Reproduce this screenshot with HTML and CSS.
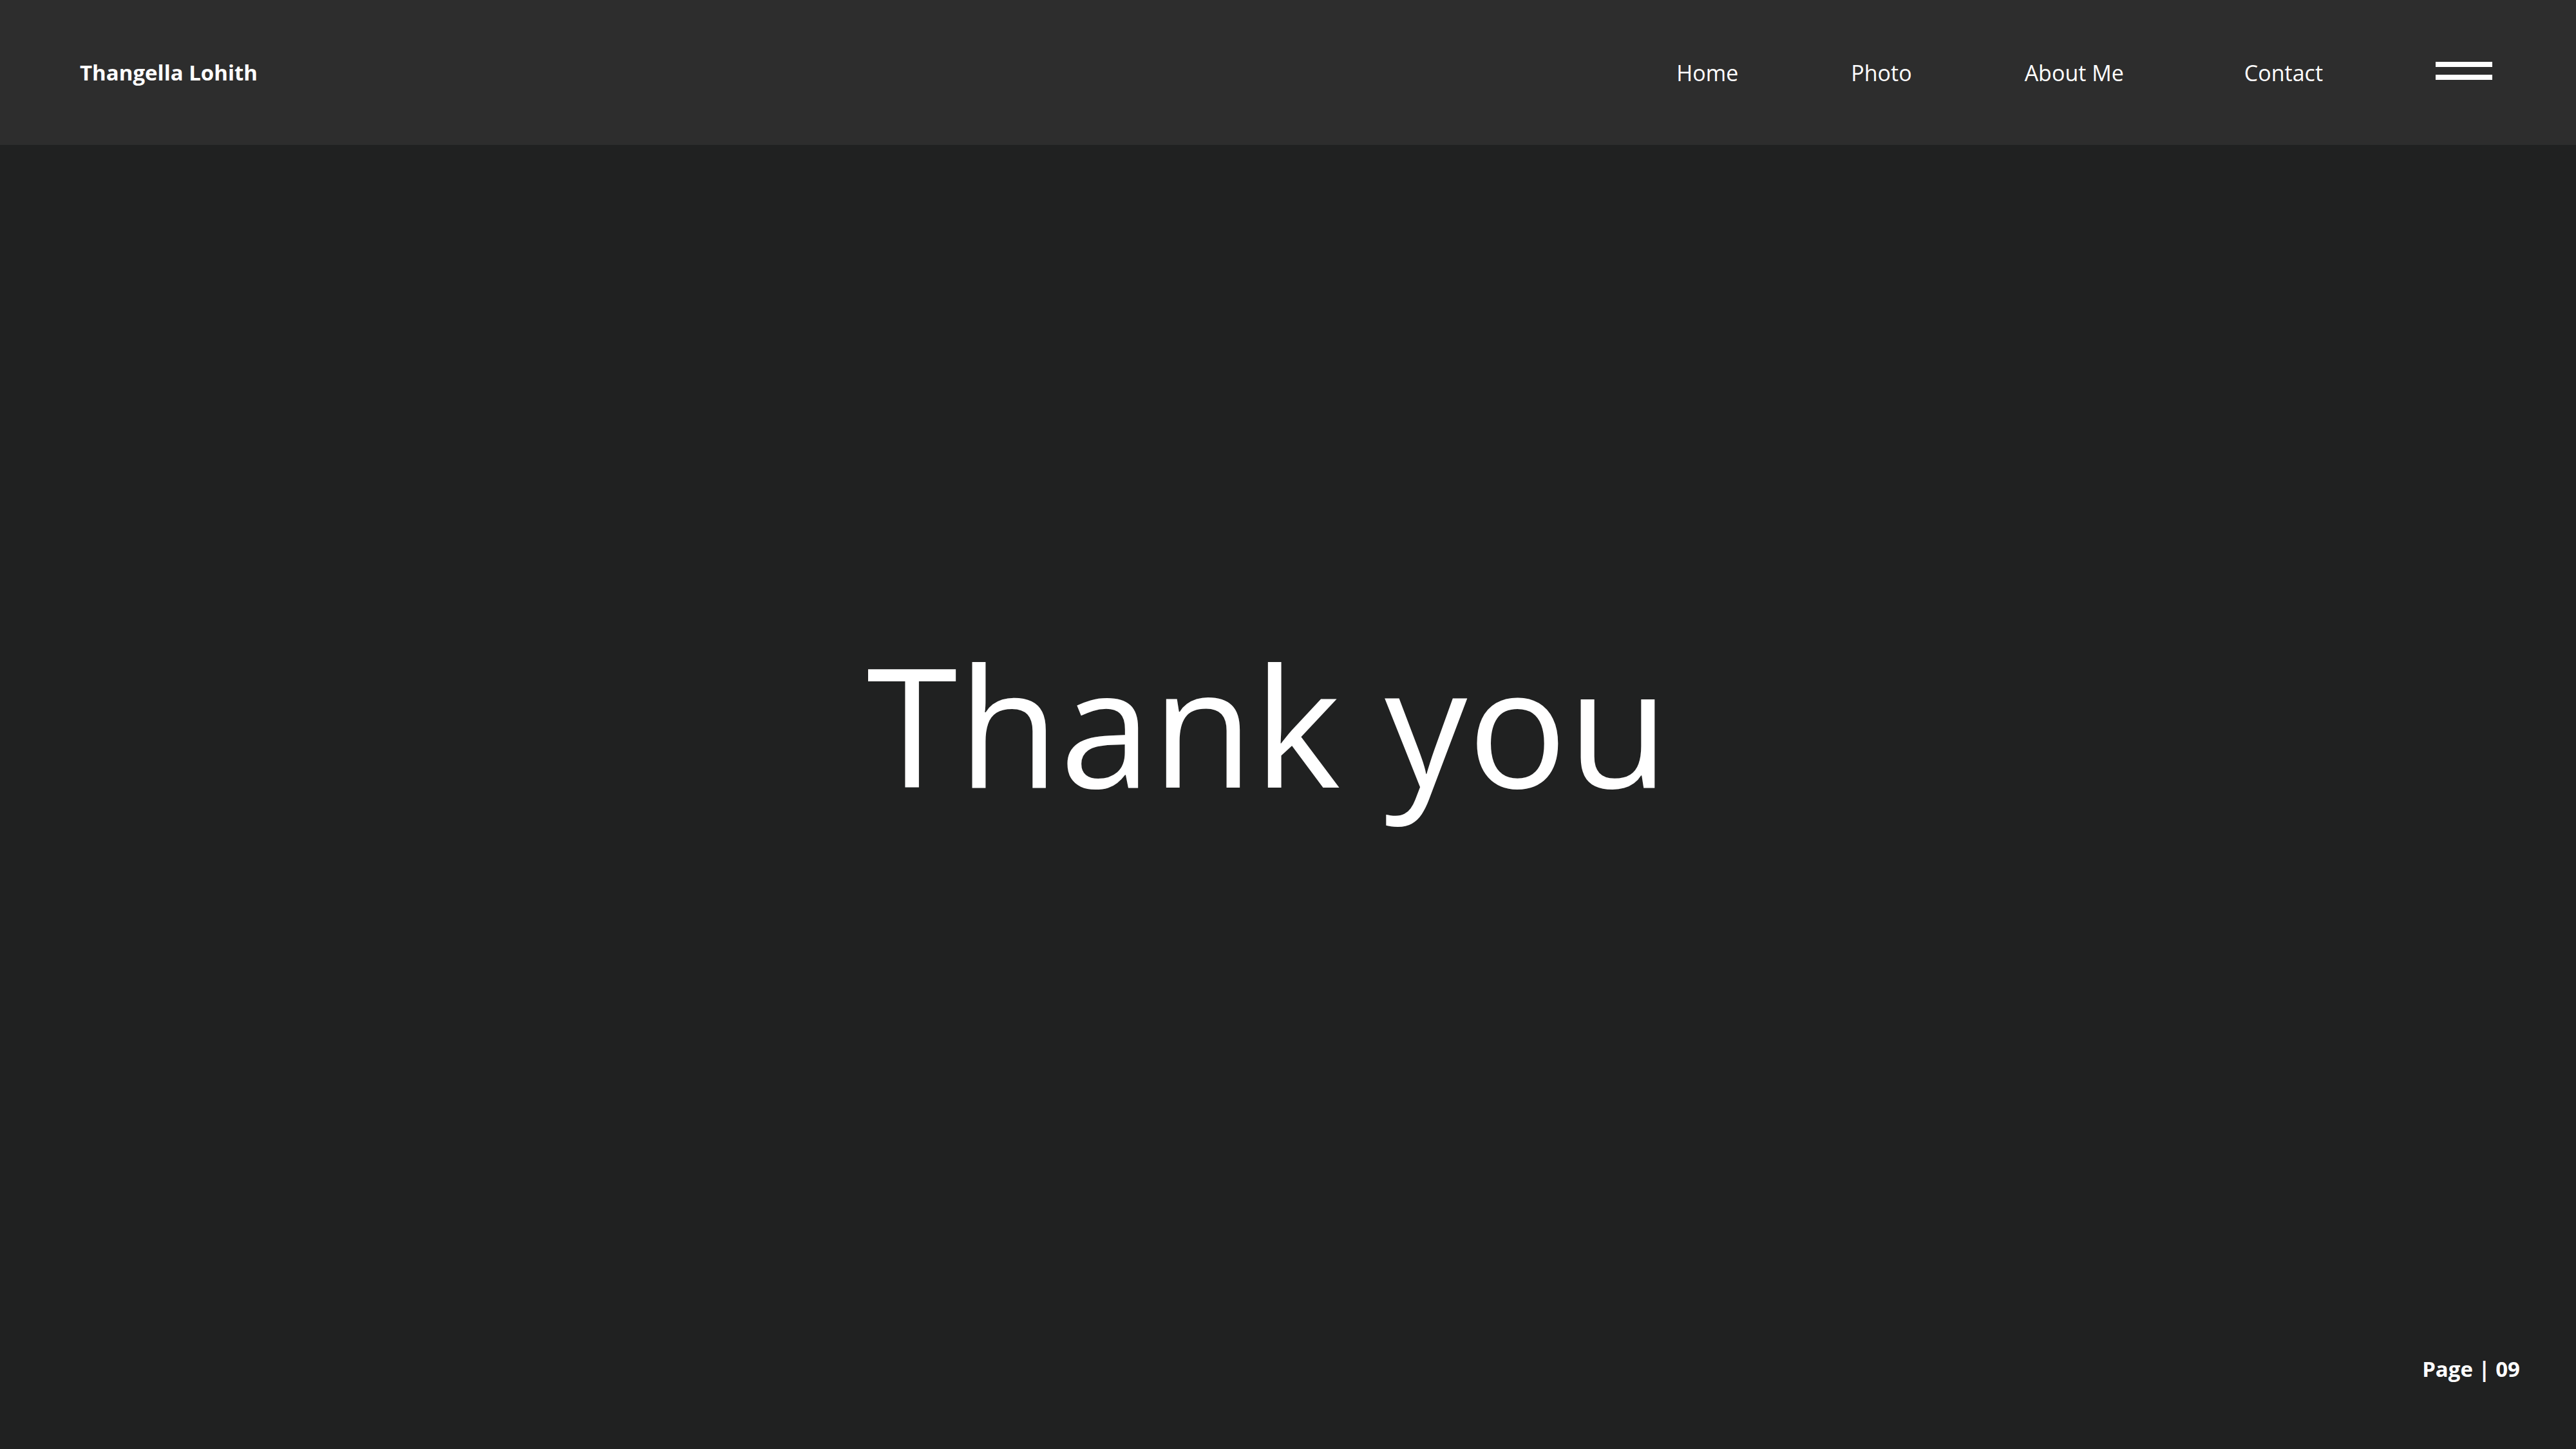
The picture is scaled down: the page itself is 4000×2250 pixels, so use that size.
FILE: index.html
```html
<!DOCTYPE html>
<html lang="en">
<head>
<meta charset="utf-8">
<title>Thangella Lohith - Thank you</title>
<link rel="stylesheet" href="styles.css">
</head>
<body>
<div class="page">
  <header class="topbar">
    <div class="brand">Thangella Lohith</div>
    <nav class="nav">
      <a class="nav-link" href="#">Home</a>
      <a class="nav-link" href="#">Photo</a>
      <a class="nav-link nav-link-wide" href="#">About Me</a>
      <a class="nav-link" href="#">Contact</a>
      <button class="menu" aria-label="Menu"><span class="bar"></span><span class="bar"></span></button>
    </nav>
  </header>
  <main class="main">
    <section class="hero">
      <h1 class="title">Thank you</h1>
    </section>
    <footer class="footer">Page | 09</footer>
  </main>
</div>
</body>
</html>
```
FILE: styles.css
```css
html, body {
  margin: 0;
  padding: 0;
}
body {
  background: #202121;
  color: #ffffff;
  font-family: "Open Sans", "Noto Sans", sans-serif;
}
.page {
  width: 4000px;
  height: 2250px;
  display: flex;
  flex-direction: column;
  overflow: hidden;
}
.topbar {
  height: 225px;
  flex: 0 0 225px;
  background: #2d2d2d;
  display: flex;
  align-items: center;
  justify-content: space-between;
  padding: 0 130px 0 124px;
  box-sizing: border-box;
}
.brand {
  font-size: 33px;
  font-weight: 700;
  line-height: 1;
}
.nav {
  display: flex;
  align-items: center;
}
.nav-link {
  color: #ffffff;
  text-decoration: none;
  font-size: 34px;
  font-weight: 400;
  line-height: 1;
  margin-right: 175px;
}
.nav-link-wide {
  margin-right: 187px;
}
.menu {
  width: 88px;
  height: 28px;
  padding: 0;
  border: 0;
  background: transparent;
  display: flex;
  flex-direction: column;
  justify-content: space-between;
  margin-top: -6px;
}
.bar {
  display: block;
  width: 88px;
  height: 8px;
  background: #ffffff;
}
.main {
  flex: 1;
  display: flex;
  flex-direction: column;
}
.hero {
  flex: 1;
  display: flex;
  align-items: center;
  justify-content: center;
  padding: 0 62px 80px 0;
}
.title {
  margin: 0;
  font-size: 256px;
  font-weight: 400;
  line-height: 1;
  letter-spacing: 1px;
}
.footer {
  text-align: right;
  font-size: 33px;
  font-weight: 700;
  padding: 0 87px 102px 0;
}
```
